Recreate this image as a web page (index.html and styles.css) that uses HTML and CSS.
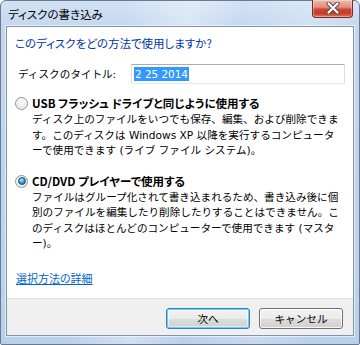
FILE: index.html
```html
<!DOCTYPE html>
<html lang="ja">
<head>
<meta charset="utf-8">
<title>ディスクの書き込み</title>
<link rel="stylesheet" href="styles.css">
</head>
<body>
<div class="window">
  <div class="titlebar">
    <span class="title">ディスクの書き込み</span>
    <div class="close">
      <svg width="14" height="12" viewBox="0 0 14 12">
        <path d="M2.5 1.5 L11.5 10.5 M11.5 1.5 L2.5 10.5" stroke="#4a4a4a" stroke-width="4" stroke-linecap="round"/>
        <path d="M2.5 1.5 L11.5 10.5 M11.5 1.5 L2.5 10.5" stroke="#ffffff" stroke-width="2.2" stroke-linecap="round"/>
      </svg>
    </div>
  </div>
  <div class="client">
    <div class="content">
      <div class="instruction">このディスクをどの方法で使用しますか?</div>
      <div class="field">
        <span class="field-label">ディスクのタイトル:</span>
        <div class="textbox"><span class="selected">2 25 2014</span></div>
      </div>
      <div class="option option-first">
        <span class="radio"></span>
        <div class="option-body">
          <div class="option-title">USB フラッシュ ドライブと同じように使用する</div>
          <div class="desc">ディスク上のファイルをいつでも保存、編集、および削除できま<br>す。このディスクは Windows XP 以降を実行するコンピュータ<br>ーで使用できます (ライブ ファイル システム)。</div>
        </div>
      </div>
      <div class="option option-second">
        <span class="radio checked"></span>
        <div class="option-body">
          <div class="option-title">CD/DVD プレイヤーで使用する</div>
          <div class="desc">ファイルはグループ化されて書き込まれるため、書き込み後に個<br>別のファイルを編集したり削除したりすることはできません。こ<br>のディスクはほとんどのコンピューターで使用できます (マスタ<br>ー)。</div>
        </div>
      </div>
      <a class="link" href="#">選択方法の詳細</a>
    </div>
    <div class="footer">
      <button class="btn btn-default">次へ</button>
      <button class="btn">キャンセル</button>
    </div>
  </div>
</div>
</body>
</html>
```

FILE: styles.css
```css
* { box-sizing: border-box; }
html, body { margin: 0; padding: 0; }
body {
  width: 360px;
  height: 345px;
  overflow: hidden;
  background: #ffffff;
  font-family: "Noto Sans CJK JP", "Noto Sans", sans-serif;
  font-size: 11px;
  font-feature-settings: "palt";
  color: #000;
}
.window {
  width: 360px;
  height: 345px;
  border: 1px solid #6b7a8f;
  border-radius: 6px 6px 2px 2px;
  background:
    linear-gradient(100deg, rgba(255,255,255,0) 30%, rgba(255,255,255,0.35) 45%, rgba(255,255,255,0) 58%, rgba(255,255,255,0.2) 75%, rgba(255,255,255,0) 88%),
    linear-gradient(to bottom, #d2e2f5 0px, #c2d6ef 30px, #b9d0ec 100%);
  display: flex;
  flex-direction: column;
  padding: 0 5px 8px 5px;
}
.titlebar {
  height: 25px;
  flex: none;
  display: flex;
  align-items: flex-start;
  justify-content: space-between;
}
.title {
  padding-left: 2px;
  line-height: 16px;
  margin-top: 5px;
  font-size: 11.5px;
  color: #000;
}
.close {
  width: 41px;
  height: 18px;
  margin-top: -1px;
  margin-right: 1px;
  border: 1px solid #7a2a20;
  border-top: none;
  border-radius: 0 0 4px 4px;
  background: linear-gradient(to bottom, #eebbaf 0%, #e08f7d 42%, #cc4530 55%, #c63d28 80%, #de7b5d 100%);
  box-shadow: inset 0 0 0 1px rgba(255,255,255,0.35);
  display: flex;
  align-items: center;
  justify-content: center;
}
.close svg { display: block; margin-top: -1px; }
.client {
  flex: 1;
  border: 1px solid #8292a8;
  box-shadow: 0 0 0 1px rgba(255,255,255,0.6);
  background: #ffffff;
  display: flex;
  flex-direction: column;
}
.content {
  flex: 1;
  padding: 8px 8px 0 8px;
  display: flex;
  flex-direction: column;
  align-items: flex-start;
}
.instruction {
  line-height: 16px;
  color: #0033aa;
  font-size: 11.5px;
}
.field {
  margin-top: 13px;
  height: 20px;
  display: flex;
  align-items: center;
  align-self: stretch;
}
.field-label {
  width: 116px;
  padding-left: 3px;
  line-height: 16px;
  font-family: "DejaVu Sans", "Noto Sans CJK JP", sans-serif;
  font-size: 10.6px;
  font-feature-settings: normal;
}
.textbox {
  flex: 1;
  height: 20px;
  border: 1px solid #abadb3;
  border-left-color: #dbdfe6;
  border-right-color: #dbdfe6;
  border-bottom-color: #e3e9ef;
  display: flex;
  align-items: center;
  padding-left: 2px;
}
.selected {
  background: #3399ff;
  color: #fff;
  line-height: 14px;
  height: 14px;
  padding: 0 1px;
  font-family: "DejaVu Sans", sans-serif;
  font-size: 10.4px;
}
.option {
  display: flex;
  align-items: flex-start;
}
.option-first { margin-top: 11px; }
.option-second { margin-top: 14px; }
.radio {
  width: 13px;
  height: 13px;
  margin-top: 2px;
  margin-right: 4px;
  border-radius: 50%;
  border: 1px solid #929292;
  background: radial-gradient(circle at 50% 40%, #ffffff 0%, #f0f0f0 40%, #d2d2d2 100%);
  box-shadow: inset 0 0 0 1px rgba(255,255,255,0.7);
  display: flex;
  align-items: center;
  justify-content: center;
  flex: none;
}
.radio.checked::after {
  content: "";
  width: 6px;
  height: 6px;
  border-radius: 50%;
  background: radial-gradient(circle at 40% 35%, #b8f0ff 0%, #3aa8e0 45%, #1a5c8c 100%);
  border: 1px solid #1f4f78;
  box-sizing: content-box;
}
.option-title {
  font-weight: bold;
  line-height: 16px;
  font-size: 11.5px;
}
.desc {
  margin-top: 1px;
  line-height: 15.5px;
  white-space: nowrap;
  font-family: "DejaVu Sans", "Noto Sans CJK JP", sans-serif;
  font-size: 10.6px;
  font-feature-settings: normal;
}
.link {
  margin-top: 18px;
  margin-left: 1px;
  line-height: 16px;
  color: #0066cc;
  text-decoration: underline;
}
.footer {
  flex: none;
  height: 37px;
  background: #f0f0f0;
  border-top: 1px solid #dfdfdf;
  display: flex;
  justify-content: flex-end;
  align-items: flex-start;
  gap: 9px;
  padding: 9px 10px 0 0;
}
.btn {
  width: 84px;
  height: 21px;
  margin: 0;
  padding: 0;
  border: 1px solid #707070;
  border-radius: 3px;
  background: linear-gradient(to bottom, #f2f2f2 0%, #ebebeb 50%, #dddddd 51%, #cfcfcf 100%);
  box-shadow: inset 0 0 0 1px rgba(255,255,255,0.8);
  font-family: "Noto Sans CJK JP", sans-serif;
  font-size: 10.6px;
  font-feature-settings: normal;
  color: #000;
  line-height: 16px;
}
.btn-default {
  border-color: #3c7fb1;
  box-shadow: inset 0 0 0 1px #5fd4f4, inset 0 0 0 2px rgba(255,255,255,0.5);
}
```
